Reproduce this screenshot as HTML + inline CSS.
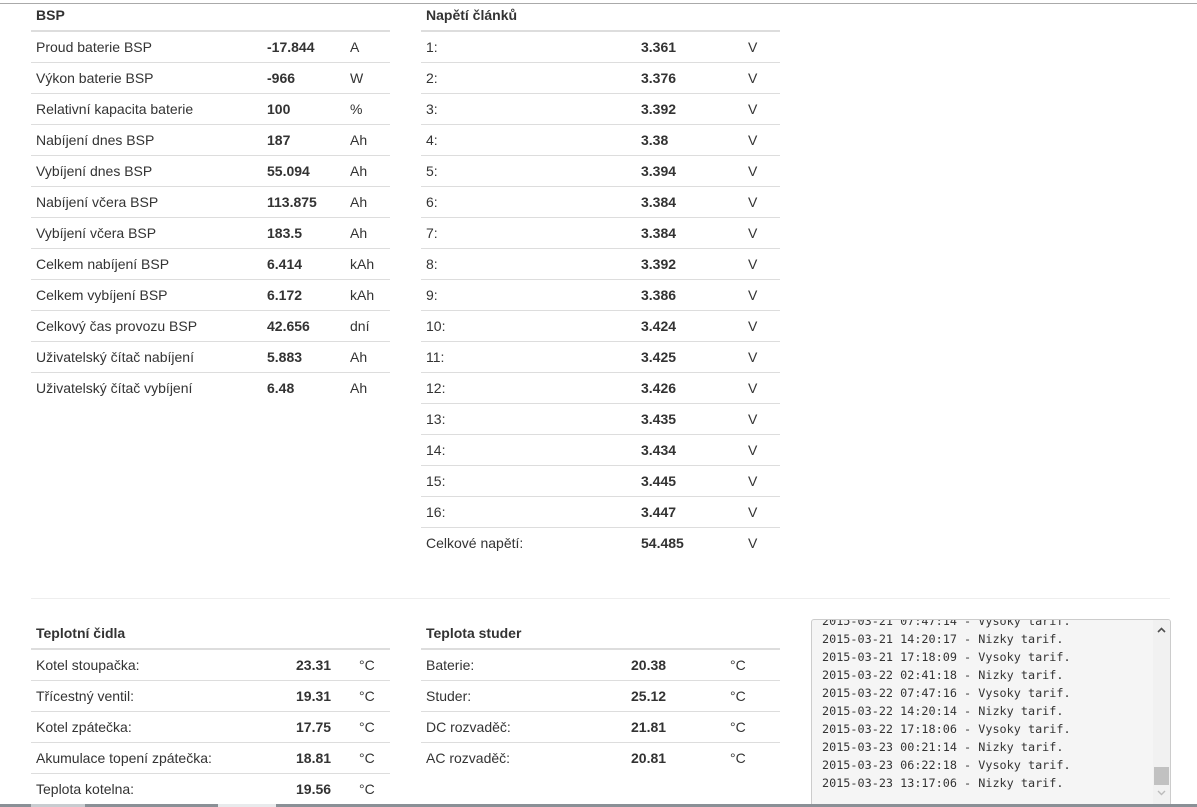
<!DOCTYPE html>
<html><head><meta charset="utf-8">
<style>
*{margin:0;padding:0;box-sizing:border-box}
body{width:1197px;height:807px;overflow:hidden;background:#fff;font-family:"Liberation Sans",Arial,sans-serif;font-size:14px;color:#333;position:relative}
.topline{position:absolute;left:0;top:3px;width:1197px;height:1px;background:#aaa}
.tbl{position:absolute}
.h{height:32px;border-bottom:2px solid #ddd;font-weight:bold;padding:7px 5px 0}
.r{height:31px;border-bottom:1px solid #ddd;position:relative;line-height:31px}
.r:last-child{border-bottom:none}
.r span{position:absolute;top:0}
.r .l{left:5px}
.r .v{font-weight:bold}
.hr{position:absolute;left:31px;top:598px;width:1139px;height:1px;background:#eee}
.log{position:absolute;left:811px;top:619px;width:360px;height:188px;background:#f5f5f5;border:1px solid #ccc;border-radius:3px;overflow:hidden}
.log pre{font-family:"DejaVu Sans Mono","Liberation Mono",monospace;font-size:11.8px;line-height:18px;color:#333;position:absolute;left:10px;top:-8px}
.sb{position:absolute;right:0;top:0;width:17px;height:100%;background:#f1f1f1}
.thumb{position:absolute;left:1px;top:147px;width:15px;height:18px;background:#c1c1c1}
.bot{position:absolute;left:0;top:804px;width:1197px;height:3px;background:#8a9096}
</style></head><body>
<div class="topline"></div>

<div class="tbl" style="left:31px;top:0;width:359px">
<div class="h">BSP</div>
<div class="r"><span class="l">Proud baterie BSP</span><span class="v" style="left:236px">-17.844</span><span style="left:319px">A</span></div>
<div class="r"><span class="l">Výkon baterie BSP</span><span class="v" style="left:236px">-966</span><span style="left:319px">W</span></div>
<div class="r"><span class="l">Relativní kapacita baterie</span><span class="v" style="left:236px">100</span><span style="left:319px">%</span></div>
<div class="r"><span class="l">Nabíjení dnes BSP</span><span class="v" style="left:236px">187</span><span style="left:319px">Ah</span></div>
<div class="r"><span class="l">Vybíjení dnes BSP</span><span class="v" style="left:236px">55.094</span><span style="left:319px">Ah</span></div>
<div class="r"><span class="l">Nabíjení včera BSP</span><span class="v" style="left:236px">113.875</span><span style="left:319px">Ah</span></div>
<div class="r"><span class="l">Vybíjení včera BSP</span><span class="v" style="left:236px">183.5</span><span style="left:319px">Ah</span></div>
<div class="r"><span class="l">Celkem nabíjení BSP</span><span class="v" style="left:236px">6.414</span><span style="left:319px">kAh</span></div>
<div class="r"><span class="l">Celkem vybíjení BSP</span><span class="v" style="left:236px">6.172</span><span style="left:319px">kAh</span></div>
<div class="r"><span class="l">Celkový čas provozu BSP</span><span class="v" style="left:236px">42.656</span><span style="left:319px">dní</span></div>
<div class="r"><span class="l">Uživatelský čítač nabíjení</span><span class="v" style="left:236px">5.883</span><span style="left:319px">Ah</span></div>
<div class="r"><span class="l">Uživatelský čítač vybíjení</span><span class="v" style="left:236px">6.48</span><span style="left:319px">Ah</span></div>
</div>

<div class="tbl" style="left:421px;top:0;width:359px">
<div class="h">Napětí článků</div>
<div class="r"><span class="l">1:</span><span class="v" style="left:220px">3.361</span><span style="left:327px">V</span></div>
<div class="r"><span class="l">2:</span><span class="v" style="left:220px">3.376</span><span style="left:327px">V</span></div>
<div class="r"><span class="l">3:</span><span class="v" style="left:220px">3.392</span><span style="left:327px">V</span></div>
<div class="r"><span class="l">4:</span><span class="v" style="left:220px">3.38</span><span style="left:327px">V</span></div>
<div class="r"><span class="l">5:</span><span class="v" style="left:220px">3.394</span><span style="left:327px">V</span></div>
<div class="r"><span class="l">6:</span><span class="v" style="left:220px">3.384</span><span style="left:327px">V</span></div>
<div class="r"><span class="l">7:</span><span class="v" style="left:220px">3.384</span><span style="left:327px">V</span></div>
<div class="r"><span class="l">8:</span><span class="v" style="left:220px">3.392</span><span style="left:327px">V</span></div>
<div class="r"><span class="l">9:</span><span class="v" style="left:220px">3.386</span><span style="left:327px">V</span></div>
<div class="r"><span class="l">10:</span><span class="v" style="left:220px">3.424</span><span style="left:327px">V</span></div>
<div class="r"><span class="l">11:</span><span class="v" style="left:220px">3.425</span><span style="left:327px">V</span></div>
<div class="r"><span class="l">12:</span><span class="v" style="left:220px">3.426</span><span style="left:327px">V</span></div>
<div class="r"><span class="l">13:</span><span class="v" style="left:220px">3.435</span><span style="left:327px">V</span></div>
<div class="r"><span class="l">14:</span><span class="v" style="left:220px">3.434</span><span style="left:327px">V</span></div>
<div class="r"><span class="l">15:</span><span class="v" style="left:220px">3.445</span><span style="left:327px">V</span></div>
<div class="r"><span class="l">16:</span><span class="v" style="left:220px">3.447</span><span style="left:327px">V</span></div>
<div class="r"><span class="l">Celkové napětí:</span><span class="v" style="left:220px">54.485</span><span style="left:327px">V</span></div>
</div>

<div class="hr"></div>

<div class="tbl" style="left:31px;top:618px;width:359px">
<div class="h">Teplotní čidla</div>
<div class="r"><span class="l">Kotel stoupačka:</span><span class="v" style="left:265px">23.31</span><span style="left:328px">°C</span></div>
<div class="r"><span class="l">Třícestný ventil:</span><span class="v" style="left:265px">19.31</span><span style="left:328px">°C</span></div>
<div class="r"><span class="l">Kotel zpátečka:</span><span class="v" style="left:265px">17.75</span><span style="left:328px">°C</span></div>
<div class="r"><span class="l">Akumulace topení zpátečka:</span><span class="v" style="left:265px">18.81</span><span style="left:328px">°C</span></div>
<div class="r"><span class="l">Teplota kotelna:</span><span class="v" style="left:265px">19.56</span><span style="left:328px">°C</span></div>
</div>

<div class="tbl" style="left:421px;top:618px;width:359px">
<div class="h">Teplota studer</div>
<div class="r"><span class="l">Baterie:</span><span class="v" style="left:210px">20.38</span><span style="left:309px">°C</span></div>
<div class="r"><span class="l">Studer:</span><span class="v" style="left:210px">25.12</span><span style="left:309px">°C</span></div>
<div class="r"><span class="l">DC rozvaděč:</span><span class="v" style="left:210px">21.81</span><span style="left:309px">°C</span></div>
<div class="r"><span class="l">AC rozvaděč:</span><span class="v" style="left:210px">20.81</span><span style="left:309px">°C</span></div>
</div>

<div class="log"><pre>2015-03-21 07:47:14 - Vysoky tarif.
2015-03-21 14:20:17 - Nizky tarif.
2015-03-21 17:18:09 - Vysoky tarif.
2015-03-22 02:41:18 - Nizky tarif.
2015-03-22 07:47:16 - Vysoky tarif.
2015-03-22 14:20:14 - Nizky tarif.
2015-03-22 17:18:06 - Vysoky tarif.
2015-03-23 00:21:14 - Nizky tarif.
2015-03-23 06:22:18 - Vysoky tarif.
2015-03-23 13:17:06 - Nizky tarif.</pre>
<div class="sb"><svg width="17" height="17" style="position:absolute;top:2px;left:0"><path d="M5 10 L8.5 6.5 L12 10" stroke="#505050" stroke-width="1.6" fill="none"/></svg><div class="thumb"></div><svg width="17" height="17" style="position:absolute;top:164px;left:0"><path d="M5 7 L8.5 10.5 L12 7" stroke="#bbb" stroke-width="1.4" fill="none"/></svg></div>
</div>

<div class="bot"></div>
<div style="position:absolute;left:31px;top:804px;width:54px;height:3px;background:#c8ccd0"></div>
<div style="position:absolute;left:218px;top:804px;width:58px;height:3px;background:#e8eaec"></div>
</body></html>
